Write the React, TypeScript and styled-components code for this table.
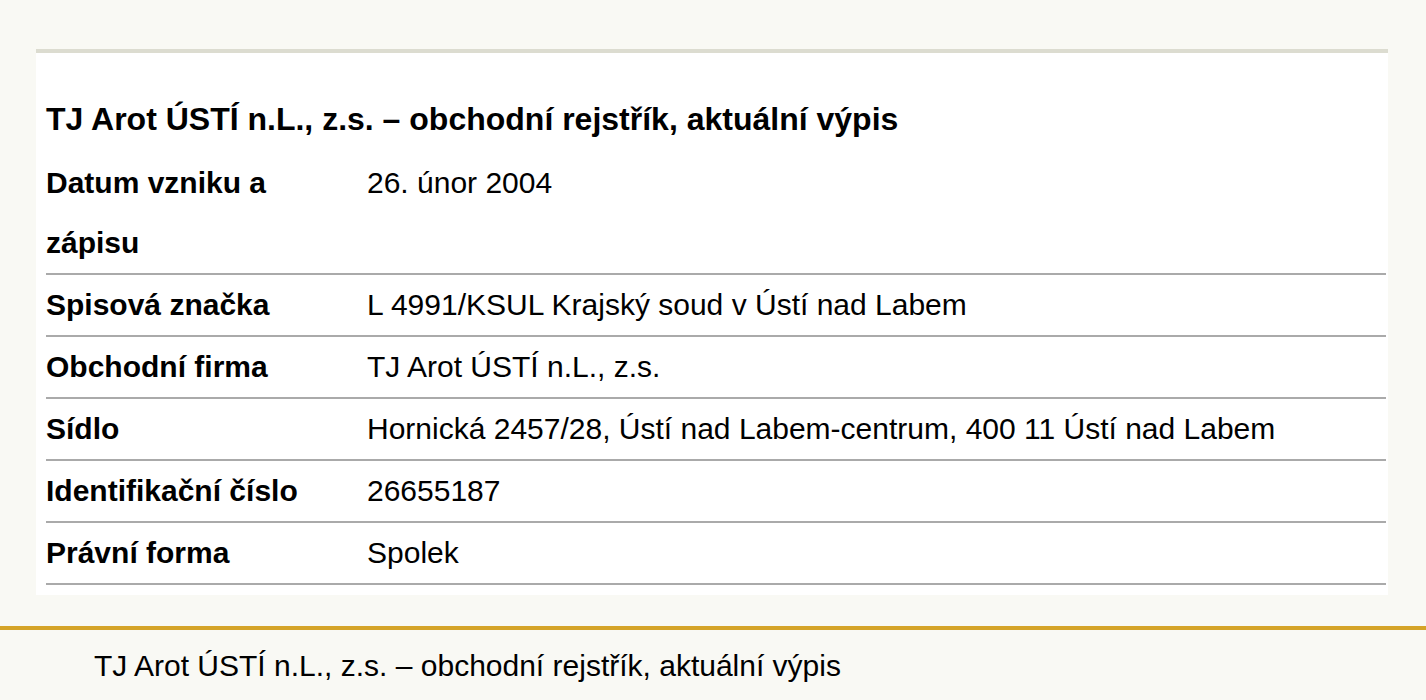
import styled, { createGlobalStyle } from 'styled-components';

const GlobalStyle = createGlobalStyle`
  html, body {
    margin: 0;
    padding: 0;
    background: #f9f9f4;
  }
  body {
    font-family: 'Liberation Sans', Arial, sans-serif;
    color: #000;
  }
`;

const Page = styled.div`
  padding-top: 49px;
`;

const Card = styled.section`
  margin: 0 38px 0 36px;
  border-top: 4px solid #dcdcd0;
  background: #fff;
  padding: 36px 2px 10px 10px;
`;

const Title = styled.h2`
  margin: 0 0 4px;
  font-size: 32px;
  line-height: 60px;
  font-weight: bold;
`;

const Row = styled.div`
  display: grid;
  grid-template-columns: 321px 1fr;
  align-items: start;
  border-bottom: 2px solid #aaa;
  font-size: 30px;
  line-height: 60px;
`;

const Label = styled.div`
  font-weight: bold;
`;

const Value = styled.div``;

const Footer = styled.footer`
  margin-top: 31px;
  border-top: 4px solid #d5a428;
  padding: 6px 0 0 94px;
  font-size: 30px;
  line-height: 60px;
`;

const rows: [string, string][] = [
  ['Datum vzniku a zápisu', '26. únor 2004'],
  ['Spisová značka', 'L 4991/KSUL Krajský soud v Ústí nad Labem'],
  ['Obchodní firma', 'TJ Arot ÚSTÍ n.L., z.s.'],
  ['Sídlo', 'Hornická 2457/28, Ústí nad Labem-centrum, 400 11 Ústí nad Labem'],
  ['Identifikační číslo', '26655187'],
  ['Právní forma', 'Spolek'],
];

export default function App() {
  return (
    <Page>
      <GlobalStyle />
      <Card>
        <Title>TJ Arot ÚSTÍ n.L., z.s. – obchodní rejstřík, aktuální výpis</Title>
        {rows.map(([label, value]) => (
          <Row key={label}>
            <Label>{label}</Label>
            <Value>{value}</Value>
          </Row>
        ))}
      </Card>
      <Footer>TJ Arot ÚSTÍ n.L., z.s. – obchodní rejstřík, aktuální výpis</Footer>
    </Page>
  );
}
